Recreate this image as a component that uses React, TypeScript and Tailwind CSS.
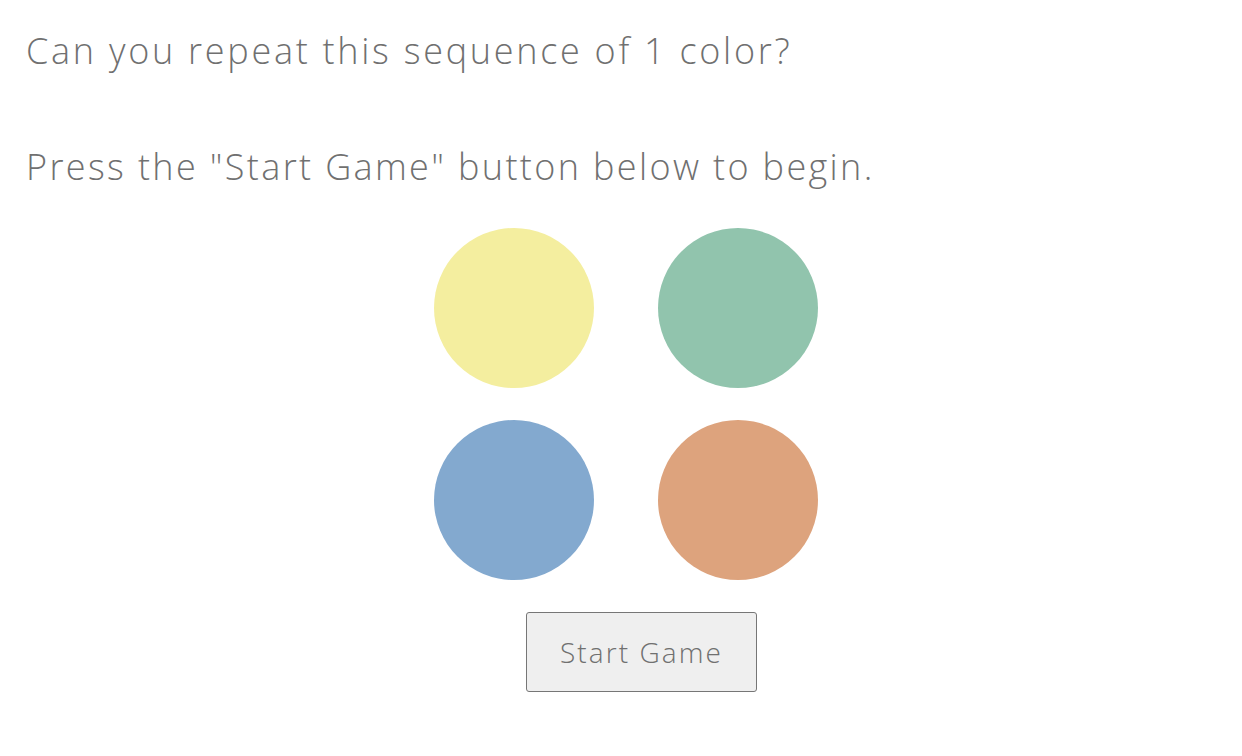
export default function App() {
  const font = { fontFamily: '"Open Sans", "Liberation Sans", sans-serif' };
  return (
    <div className="min-h-[756px] bg-white text-[#707070] pl-[26px] pt-[23px]" style={font}>
      <p className="text-[36px] leading-[56px] font-light tracking-[2.72px]">Can you repeat this sequence of 1 color?</p>
      <p className="text-[36px] leading-[56px] font-light tracking-[2.36px] mt-[60px]">Press the "Start Game" button below to begin.</p>
      <div className="ml-[408px] mt-[33px] grid grid-cols-[160px_160px] gap-x-[64px] gap-y-[32px] w-fit">
        <div className="w-[160px] h-[160px] rounded-full bg-[#f4ee9f]" />
        <div className="w-[160px] h-[160px] rounded-full bg-[#91c4ad]" />
        <div className="w-[160px] h-[160px] rounded-full bg-[#83a9cf]" />
        <div className="w-[160px] h-[160px] rounded-full bg-[#dda37d]" />
      </div>
      <button className="ml-[500px] mt-[32px] w-[231px] h-[80px] bg-[#efefef] border border-[#767676] rounded-[3px] text-[28px] font-light tracking-[2.1px] text-[#707070]">Start Game</button>
    </div>
  );
}
